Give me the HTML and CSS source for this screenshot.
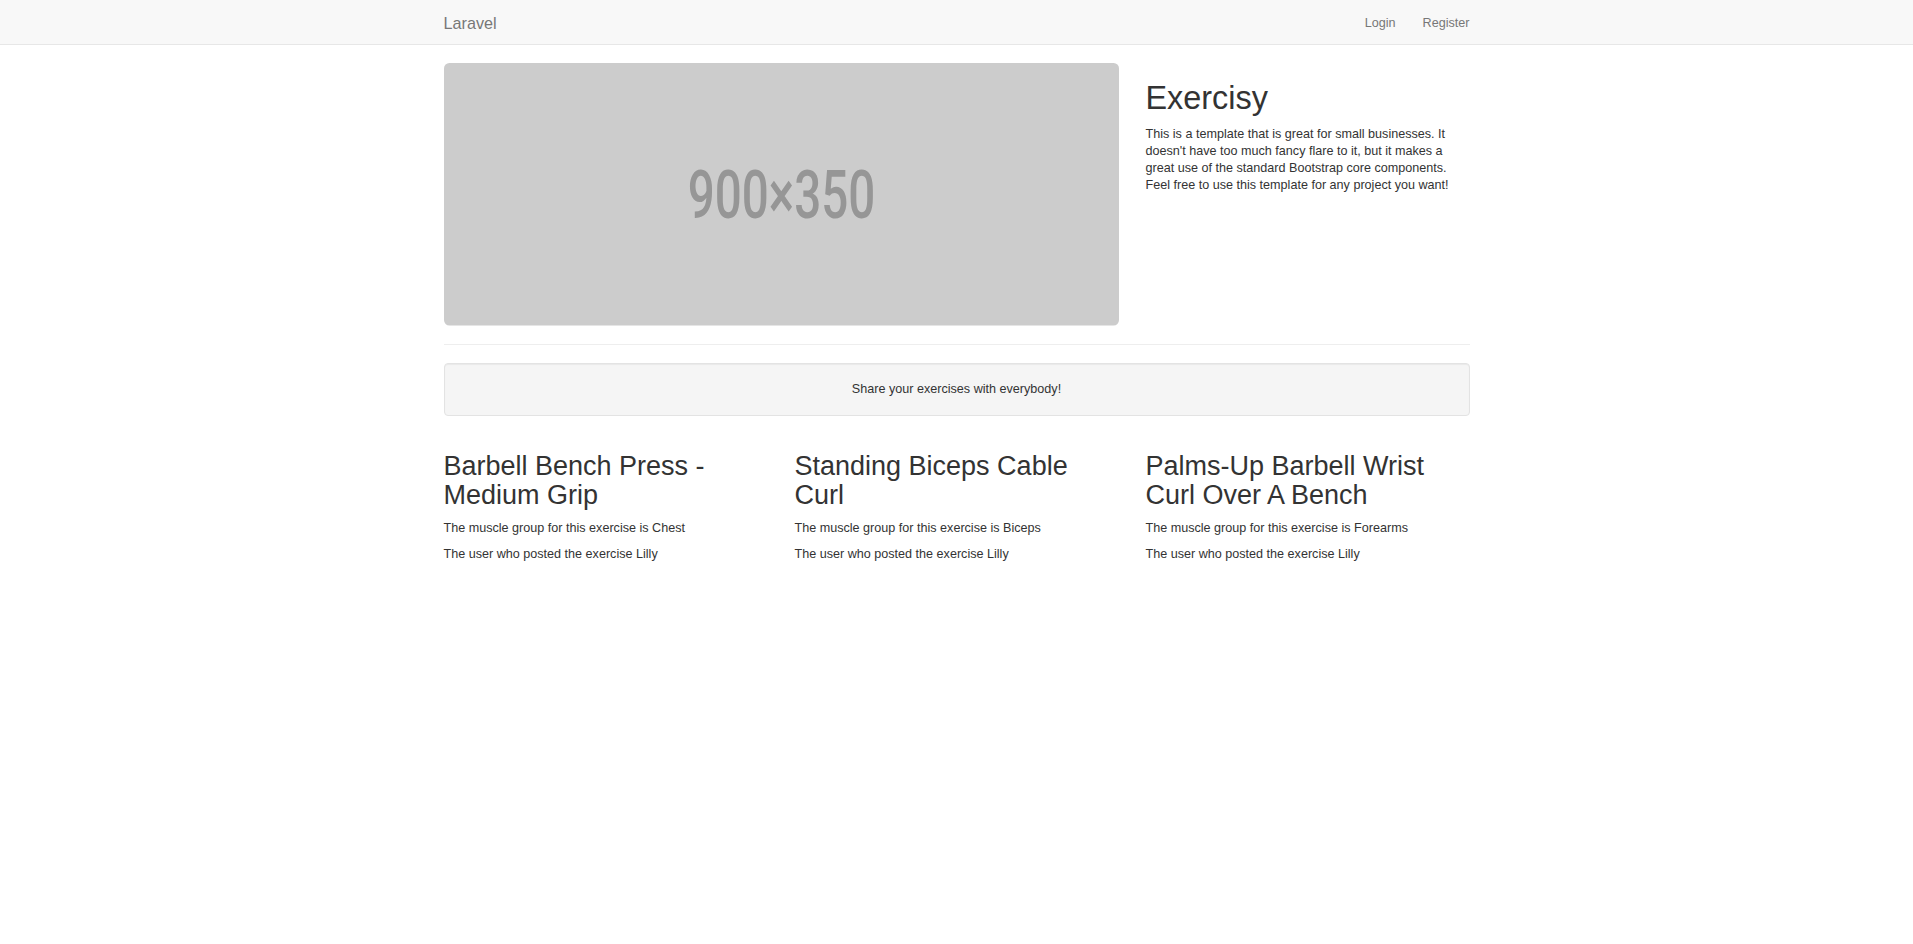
FILE: index.html
```html
<!DOCTYPE html>
<html lang="en">
<head>
<meta charset="utf-8">
<title>Exercisy</title>
<link rel="stylesheet" href="styles.css">
</head>
<body>
<nav class="navbar">
  <div class="container navbar-inner">
    <a class="navbar-brand" href="#">Laravel</a>
    <ul class="nav-right">
      <li><a href="#">Login</a></li>
      <li><a href="#">Register</a></li>
    </ul>
  </div>
</nav>
<div class="container">
  <div class="row">
    <div class="col col-8">
      <svg class="hero-img" viewBox="0 0 900 350" preserveAspectRatio="none">
        <rect width="900" height="350" rx="7.2" ry="7.2" fill="#cccccc"/>
        <text x="450" y="206.5" text-anchor="middle" textLength="250" lengthAdjust="spacingAndGlyphs" font-family="Roboto, DejaVu Sans, sans-serif" font-weight="500" font-size="88" fill="#969696">900×350</text>
      </svg>
    </div>
    <div class="col col-4">
      <h1>Exercisy</h1>
      <p>This is a template that is great for small businesses. It doesn't have too much fancy flare to it, but it makes a great use of the standard Bootstrap core components. Feel free to use this template for any project you want!</p>
    </div>
  </div>
  <hr>
  <div class="well">Share your exercises with everybody!</div>
  <div class="row">
    <div class="col col-third">
      <h2>Barbell Bench Press - Medium Grip</h2>
      <p>The muscle group for this exercise is Chest</p>
      <p>The user who posted the exercise Lilly</p>
    </div>
    <div class="col col-third">
      <h2>Standing Biceps Cable Curl</h2>
      <p>The muscle group for this exercise is Biceps</p>
      <p>The user who posted the exercise Lilly</p>
    </div>
    <div class="col col-third">
      <h2>Palms-Up Barbell Wrist Curl Over A Bench</h2>
      <p>The muscle group for this exercise is Forearms</p>
      <p>The user who posted the exercise Lilly</p>
    </div>
  </div>
</div>
</body>
</html>
```
FILE: styles.css
```css
* { box-sizing: border-box; }
body {
  margin: 0;
  font-family: "Liberation Sans", Arial, Helvetica, sans-serif;
  font-size: 12.6px;
  line-height: 17px;
  color: #333;
  background: #fff;
}
a { text-decoration: none; }
.container {
  width: 1053px;
  margin: 0 auto;
  padding: 0 13.5px;
}
.navbar {
  height: 45px;
  background: #f8f8f8;
  border-bottom: 1px solid #e7e7e7;
  margin-bottom: 18px;
}
.navbar-inner {
  display: flex;
  justify-content: space-between;
  align-items: flex-start;
}
.navbar-brand {
  display: block;
  height: 44px;
  padding: 13.5px;
  margin-left: -13.5px;
  font-size: 16.2px;
  line-height: 18px;
  color: #777;
}
.nav-right {
  display: flex;
  list-style: none;
  margin: 0 -13.5px 0 0;
  padding: 0;
}
.nav-right a {
  display: block;
  padding: 13.5px;
  line-height: 18px;
  color: #777;
}
.row {
  display: flex;
  margin: 0 -13.5px;
}
.col { padding: 0 13.5px; }
.col-8 { width: 66.6667%; }
.col-4 { width: 33.3333%; }
.col-third { width: 33.3333%; }
.hero-img {
  display: block;
  width: 675px;
  height: 262.5px;
}
h1, h2 {
  font-weight: 500;
  line-height: 1.1;
  color: #333;
  margin: 18px 0 9px;
}
h1 { font-size: 32.4px; }
h2 { font-size: 27px; }
p { margin: 0 0 9px; }
hr {
  margin: 18px 0;
  border: 0;
  border-top: 1px solid #eee;
  height: 0;
}
.well {
  padding: 17px;
  margin-bottom: 18px;
  background: #f5f5f5;
  border: 1px solid #e3e3e3;
  border-radius: 4px;
  box-shadow: inset 0 1px 1px rgba(0,0,0,.05);
  text-align: center;
}
```
